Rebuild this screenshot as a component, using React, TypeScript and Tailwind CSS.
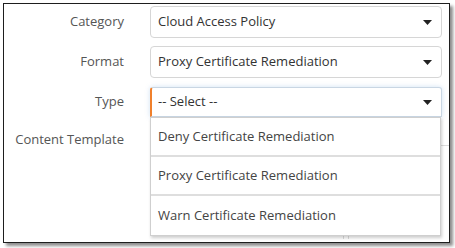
const Caret = () => (
  <svg width="9" height="5" viewBox="0 0 9 5" className="shrink-0">
    <path d="M0 0 H9 L4.5 5 Z" fill="#222" />
  </svg>
);

const Row = ({ label, children }: { label: string; children: React.ReactNode }) => (
  <div className="flex items-center h-[32px]">
    <div className="w-[120px] text-right text-[#555]">{label}</div>
    <div className="ml-[26px]">{children}</div>
  </div>
);

const SelectBox = ({ value, focused }: { value: string; focused?: boolean }) => (
  <div
    className={
      focused
        ? "w-[292px] h-[30px] flex items-center justify-between pl-[6px] pr-[9px] bg-white border border-[#c9d6e3] border-l-2 border-l-[#f0802c] rounded-t-[3px] shadow-[0_0_5px_rgba(120,170,220,0.35)] text-[#333]"
        : "w-[292px] h-[32px] flex items-center justify-between pl-[7px] pr-[9px] bg-white border border-[#d6d6d6] rounded-[4px] text-[#333]"
    }
  >
    <span>{value}</span>
    <Caret />
  </div>
);

const options = [
  "Deny Certificate Remediation",
  "Proxy Certificate Remediation",
  "Warn Certificate Remediation",
];

export default function App() {
  return (
    <div
      className="w-[455px] h-[248px] bg-white pl-[3px] pt-[3px] text-[13px]"
      style={{ fontFamily: '"Open Sans", "Liberation Sans", sans-serif' }}
    >
      <div className="relative w-[447px] h-[240px] border-[1.5px] border-[#1e1e1e] bg-white shadow-[3px_3px_3px_rgba(0,0,0,0.45)] overflow-visible">
        <div className="flex flex-col gap-[8px] pt-[2px]">
          <Row label="Category">
            <SelectBox value="Cloud Access Policy" />
          </Row>
          <Row label="Format">
            <SelectBox value="Proxy Certificate Remediation" />
          </Row>
          <Row label="Type">
            <div className="relative">
              <SelectBox value="-- Select --" focused />
              <div className="absolute left-0 top-[30px] z-10 w-[291px] bg-white border border-[#cfcfcf] shadow-[1px_2px_3px_rgba(0,0,0,0.2)]">
                {options.map((o, i) => (
                  <div
                    key={o}
                    className={
                      "h-[39px] flex items-center pl-[7px] text-[#444] " +
                      (i < options.length - 1 ? "border-b-2 border-[#dedede]" : "")
                    }
                  >
                    {o}
                  </div>
                ))}
              </div>
            </div>
          </Row>
          <div className="flex items-start h-[100px]">
            <div className="w-[120px] pt-[4px] text-right text-[#555]">Content Template</div>
            <div className="ml-[26px] flex-1 mt-[19px] border-t border-[#dcdcdc] h-[94px] flex">
              <div className="w-[193px]" />
              <div className="w-[6px] border-x border-[#dcdcdc]" />
            </div>
          </div>
        </div>
      </div>
    </div>
  );
}
